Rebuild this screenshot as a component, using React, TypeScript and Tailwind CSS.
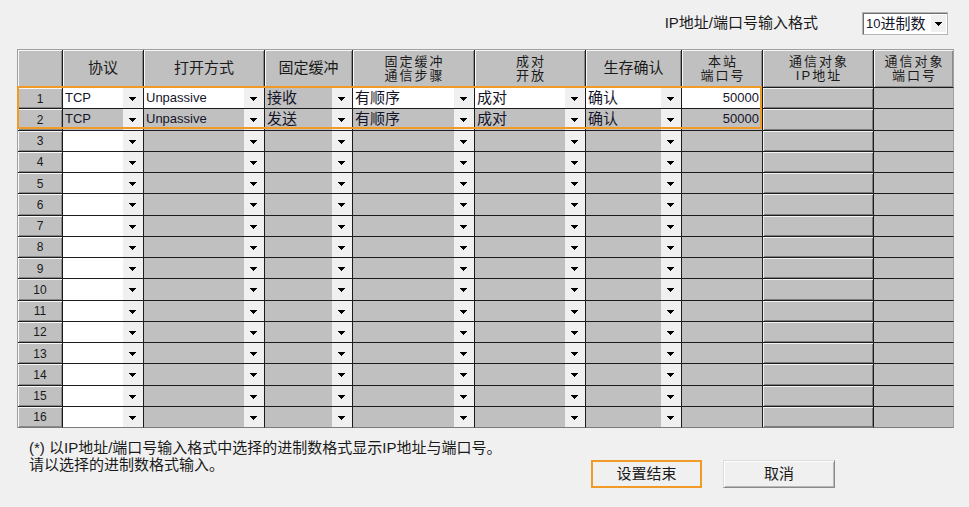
import React from "react";

const Arrow = () => (
  <svg width="7" height="4" viewBox="0 0 7 4" className="block">
    <path d="M0 0H7V1H6V2H5V3H4V4H3V3H2V2H1V1H0Z" fill="#000" />
  </svg>
);

type RowData = {
  proto: string;
  open: string;
  buf: string;
  step: string;
  pair: string;
  alive: string;
  port: string;
};

const filled: RowData[] = [
  { proto: "TCP", open: "Unpassive", buf: "接收", step: "有顺序", pair: "成对", alive: "确认", port: "50000" },
  { proto: "TCP", open: "Unpassive", buf: "发送", step: "有顺序", pair: "成对", alive: "确认", port: "50000" },
];

const empty: RowData = { proto: "", open: "", buf: "", step: "", pair: "", alive: "", port: "" };

const rows: RowData[] = Array.from({ length: 16 }, (_, i) => filled[i] ?? empty);

const headers: string[][] = [
  [],
  ["协议"],
  ["打开方式"],
  ["固定缓冲"],
  ["固定缓冲", "通信步骤"],
  ["成对", "开放"],
  ["生存确认"],
  ["本站", "端口号"],
  ["通信对象", "IP地址"],
  ["通信对象", "端口号"],
];

const line = "border-r border-b border-[#1c1c1c]";
const raised = "shadow-[inset_1px_1px_0_#f7f7f7,inset_-1px_-1px_0_#8a8a8a]";

const HeaderCell = ({ lines, last }: { lines: string[]; last: boolean }) => (
  <div
    className={`flex flex-col items-center justify-center bg-[#c0c0c0] ${raised} border-b border-[#1c1c1c] ${
      last ? "border-r border-r-[#a0a0a0]" : "border-r"
    } text-[#1a1a1a]`}
  >
    {lines.length === 2 ? (
      <>
        <span className="text-[13px] leading-[14px] tracking-[2px] pl-[2px]">{lines[0]}</span>
        <span className="text-[13px] leading-[14px] tracking-[2px] pl-[2px]">{lines[1]}</span>
      </>
    ) : (
      <span className="text-[15px] leading-[16px] pb-[2px]">{lines[0]}</span>
    )}
  </div>
);

const Combo = ({ text, white, bottom, ascii }: { text: string; white: boolean; bottom: boolean; ascii?: boolean }) => (
  <div className={`flex min-w-0 ${line} ${bottom ? "border-b-[#7a7a7a]" : ""}`}>
    <div
      className={`flex-1 min-w-0 flex items-center pl-[2px] overflow-hidden whitespace-nowrap text-[#15152a] ${
        white ? "bg-white" : "bg-[#c0c0c0]"
      } ${ascii ? "text-[13px]" : "text-[15px]"} leading-[16px]`}
    >
      {text}
    </div>
    <div className="w-[19px] flex-none bg-[#f0f0f0] flex items-center justify-center pt-[2px] mr-[1px]">
      <Arrow />
    </div>
  </div>
);

export default function App() {
  return (
    <div className="w-[969px] h-[507px] bg-[#f0f0f0] overflow-hidden font-['Liberation_Sans','Noto_Sans_CJK_SC',sans-serif] text-[#1a1a1a]">
      {/* format selector */}
      <div className="flex items-center justify-end pt-[12px] pr-[21px] h-[35px]">
        <span className="text-[15px] leading-[16px] pb-[1px]">IP地址/端口号输入格式</span>
        <div className="ml-[44px] flex w-[86px] h-[23px] bg-white border border-[#b4b4b4] shadow-[inset_1px_1px_0_#6e6e6e]">
          <span className="flex-1 flex items-center pl-[3px] text-[15px] leading-[16px] text-[#15152a] whitespace-nowrap">
            <span className="text-[13px]">10</span>进制数
          </span>
          <div className="w-[15px] my-[2px] mr-[1px] bg-[#f0f0f0] flex items-center justify-center pt-[1px]">
            <Arrow />
          </div>
        </div>
      </div>

      {/* table */}
      <div className="relative ml-[17px] mt-[14px] w-[937px]">
        <div className="grid grid-cols-[45px_81px_121px_88px_122px_111px_96px_81px_111px_80px] grid-rows-[38px_repeat(16,21.25px)] border-l border-t border-[#a0a0a0]">
          {headers.map((h, i) => (
            <HeaderCell key={i} lines={h} last={i === headers.length - 1} />
          ))}
          {rows.map((r, i) => {
            const bottom = i === rows.length - 1;
            const bb = bottom ? "border-b-[#7a7a7a]" : "";
            return (
              <React.Fragment key={i}>
                <div
                  className={`flex items-center justify-center bg-[#c0c0c0] ${raised} ${line} ${bb} text-[12px] leading-[14px] pt-[1px]`}
                >
                  {i + 1}
                </div>
                <Combo text={r.proto} white={i !== 1} bottom={bottom} ascii />
                <Combo text={r.open} white={i === 0} bottom={bottom} ascii />
                <Combo text={r.buf} white={false} bottom={bottom} />
                <Combo text={r.step} white={i === 0} bottom={bottom} />
                <Combo text={r.pair} white={i === 0} bottom={bottom} />
                <Combo text={r.alive} white={i === 0} bottom={bottom} />
                <div
                  className={`flex items-center justify-end pr-[3px] text-[13px] leading-[16px] text-[#15152a] ${
                    i === 0 ? "bg-white" : "bg-[#c0c0c0]"
                  } ${line} ${bb}`}
                >
                  {r.port}
                </div>
                <div
                  className={`bg-[#c0c0c0] shadow-[inset_1px_1px_0_#f2f2f2,inset_-1px_-1px_0_#7c7c7c] ${line} ${bb}`}
                />
                <div className={`bg-[#c0c0c0] border-b border-[#1c1c1c] border-r border-r-[#a0a0a0] ${bb}`} />
              </React.Fragment>
            );
          })}
        </div>
        {/* selection frame over rows 1-2 */}
        <div className="absolute left-0 top-[37px] w-[745px] h-[43px] border-2 border-[#f09a28] pointer-events-none" />
      </div>

      {/* footer */}
      <div className="flex">
        <div className="pl-[29px] pt-[11px] text-[15px] leading-[17px]">
          <div>(*) 以IP地址/端口号输入格式中选择的进制数格式显示IP地址与端口号。</div>
          <div>请以选择的进制数格式输入。</div>
        </div>
        <div className="ml-auto pt-[32px] pr-[134px] flex gap-[21px]">
          <button className="w-[111px] h-[28px] bg-[#f0f0f0] border-2 border-[#f09a28] text-[15px] leading-[16px] flex items-center justify-center">
            设置结束
          </button>
          <button className="w-[112px] h-[28px] bg-[#f0f0f0] border border-t-[#dcdcdc] border-l-[#dcdcdc] border-r-[#8a8a8a] border-b-[#8a8a8a] shadow-[inset_1px_1px_0_#ffffff,inset_-1px_-1px_0_#b8b8b8] text-[15px] leading-[16px] flex items-center justify-center">
            取消
          </button>
        </div>
      </div>
    </div>
  );
}
